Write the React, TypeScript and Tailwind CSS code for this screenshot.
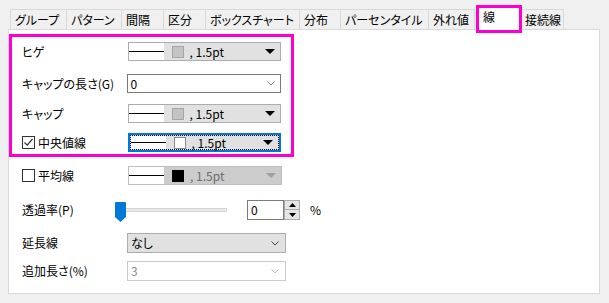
import React from "react";

const TABS = [
  { label: "グループ", w: "w-[56px]" },
  { label: "パターン", w: "w-[55px]" },
  { label: "間隔", w: "w-[42px]" },
  { label: "区分", w: "w-[42px]" },
  { label: "ボックスチャート", w: "w-[94px]" },
  { label: "分布", w: "w-[41px]" },
  { label: "パーセンタイル", w: "w-[88px]" },
];

function Arrow({ color = "#000" }: { color?: string }) {
  return (
    <svg width="10" height="5" viewBox="0 0 10 5" className="shrink-0">
      <path d="M0 0 H10 L5 5 Z" fill={color} />
    </svg>
  );
}

function Chevron({ color = "#808080" }: { color?: string }) {
  return (
    <svg width="8" height="5" viewBox="0 0 8 5" className="shrink-0">
      <path d="M0.5 0.5 L4 4 L7.5 0.5" fill="none" stroke={color} strokeWidth="1" />
    </svg>
  );
}

type Variant = "normal" | "focused" | "disabled";

function LineCombo({ variant = "normal" }: { variant?: Variant }) {
  const outer =
    variant === "focused"
      ? "border-2 border-[#0078d7] bg-[#e1e1e1]"
      : variant === "disabled"
        ? "border border-[#bfbfbf] bg-[#cccccc]"
        : "border border-[#adadad] bg-[#e1e1e1]";
  const square =
    variant === "focused"
      ? "bg-white border-[#8c8c8c]"
      : variant === "disabled"
        ? "bg-black border-black"
        : "bg-[#c3c3c3] border-[#a6a6a6]";
  const text = variant === "disabled" ? "text-[#6d6d6d]" : "text-black";
  const inner = (
    <>
      <div className="flex h-full w-[35px] shrink-0 items-center bg-white">
        <div className="h-px w-full bg-black" />
      </div>
      <div className={`ml-[8px] h-[12px] w-[12px] shrink-0 border ${square}`} />
      <span className={`ml-[6px] flex-1 text-[12px] leading-none ${text}`}>,&nbsp;1.5pt</span>
      <div className="mr-[5px]">
        <Arrow color={variant === "disabled" ? "#a0a0a0" : "#000"} />
      </div>
    </>
  );
  return (
    <div className={`flex h-[19px] w-[154px] items-center ${outer}`}>
      {variant === "focused" ? (
        <div className="flex h-full w-full items-center border border-dotted border-black">{inner}</div>
      ) : (
        inner
      )}
    </div>
  );
}

function Checkbox({ checked }: { checked?: boolean }) {
  return (
    <div className="mr-[3px] flex h-[13px] w-[13px] shrink-0 items-center justify-center border border-[#333] bg-white">
      {checked && (
        <svg width="11" height="11" viewBox="0 0 11 11">
          <path d="M1.5 5.5 L4.2 8.2 L9.5 2" fill="none" stroke="#333" strokeWidth="1.2" />
        </svg>
      )}
    </div>
  );
}

export default function App() {
  return (
    <div
      className="h-[303px] w-[609px] overflow-hidden bg-[#f0f0f0] pt-[9px] text-black [font-feature-settings:'palt']"
      style={{ fontFamily: '"Noto Sans CJK JP", "Noto Sans", sans-serif' }}
    >
      {/* Tabs */}
      <div className="flex h-[20px] items-start whitespace-nowrap pl-[10px] text-[12px] leading-none">
        {TABS.map((t) => (
          <div
            key={t.label}
            className={`${t.w} flex h-[20px] items-center border-l border-t border-[#d9d9d9] pl-[4px]`}
          >
            {t.label}
          </div>
        ))}
        <div className="flex h-[20px] w-[47px] items-center border-x border-t border-[#d9d9d9] pl-[4px]">
          外れ値
        </div>
        <div className="relative z-10 ml-px -mt-[4px] flex h-[28px] w-[46px] items-start border-[3px] border-[#ff00cc] bg-white pl-[4px] pt-[3px]">
          線
        </div>
        <div className="flex h-[20px] w-[42px] items-center border-r border-t border-[#d9d9d9] pl-[3px]">
          接続線
        </div>
      </div>

      {/* Panel */}
      <div className="ml-[8px] h-[265px] w-[592px] whitespace-nowrap border border-[#d9d9d9] bg-white text-[12px] leading-none">
        <div className="mt-[4px] h-[123px] w-[285px] border-[3px] border-[#ff00cc] px-[10px]">
          <div className="mt-[5px] flex h-[19px] items-center">
            <div className="w-[106px]">ヒゲ</div>
            <LineCombo />
          </div>
          <div className="mt-[13px] flex h-[19px] items-center">
            <div className="w-[105px]">キャップの長さ(G)</div>
            <div className="flex h-[19px] w-[155px] items-center border border-[#7a7a7a] bg-white pl-[3px] pr-[5px]">
              <span className="flex-1">0</span>
              <Chevron />
            </div>
          </div>
          <div className="mt-[11px] flex h-[19px] items-center">
            <div className="w-[106px]">キャップ</div>
            <LineCombo />
          </div>
          <div className="mt-[10px] flex h-[19px] items-center">
            <div className="flex w-[106px] items-center">
              <Checkbox checked />
              中央値線
            </div>
            <LineCombo variant="focused" />
          </div>
        </div>

        <div className="pl-[13px]">
          <div className="mt-[9px] flex h-[19px] items-center">
            <div className="flex w-[106px] items-center">
              <Checkbox />
              平均線
            </div>
            <LineCombo variant="disabled" />
          </div>

          <div className="mt-[15px] flex h-[21px] items-start">
            <div className="flex h-[20px] w-[93px] items-center">透過率(P)</div>
            <div className="relative mt-[2px] h-[19px] w-[112px]">
              <div className="absolute left-0 top-[6px] h-[4px] w-[112px] border border-[#d6d6d6] bg-[#e7eaea]" />
              <svg width="11" height="20" viewBox="0 0 11 20" className="absolute left-0 top-0">
                <path d="M1 0 H10 Q11 0 11 1 V15 L5.5 20 L0 15 V1 Q0 0 1 0 Z" fill="#0078d7" />
              </svg>
            </div>
            <div className="ml-[20px] flex h-[20px] w-[37px] items-center border border-[#7a7a7a] bg-white pl-[3px]">
              0
            </div>
            <div className="flex h-[20px] w-[16px] flex-col">
              <div className="flex h-[10px] items-center justify-center border border-[#adadad] bg-[#e5e5e5]">
                <svg width="7" height="4" viewBox="0 0 7 4">
                  <path d="M0 4 L3.5 0 L7 4 Z" fill="#000" />
                </svg>
              </div>
              <div className="flex h-[10px] items-center justify-center border border-t-0 border-[#adadad] bg-[#e5e5e5]">
                <svg width="7" height="4" viewBox="0 0 7 4">
                  <path d="M0 0 L7 0 L3.5 4 Z" fill="#000" />
                </svg>
              </div>
            </div>
            <div className="ml-[10px] flex h-[20px] items-center">%</div>
          </div>

          <div className="mt-[12px] flex h-[20px] items-center">
            <div className="w-[105px]">延長線</div>
            <div className="flex h-[20px] w-[159px] items-center border border-[#adadad] bg-[#e1e1e1] pl-[3px] pr-[6px]">
              <span className="flex-1">なし</span>
              <Chevron color="#444" />
            </div>
          </div>

          <div className="mt-[8px] flex h-[20px] items-center">
            <div className="w-[105px]">追加長さ(%)</div>
            <div className="flex h-[20px] w-[159px] items-center border border-[#cccccc] bg-white pl-[3px] pr-[6px]">
              <span className="flex-1 text-[#8a8a8a]">3</span>
              <Chevron color="#c4c4c4" />
            </div>
          </div>
        </div>
      </div>
    </div>
  );
}
